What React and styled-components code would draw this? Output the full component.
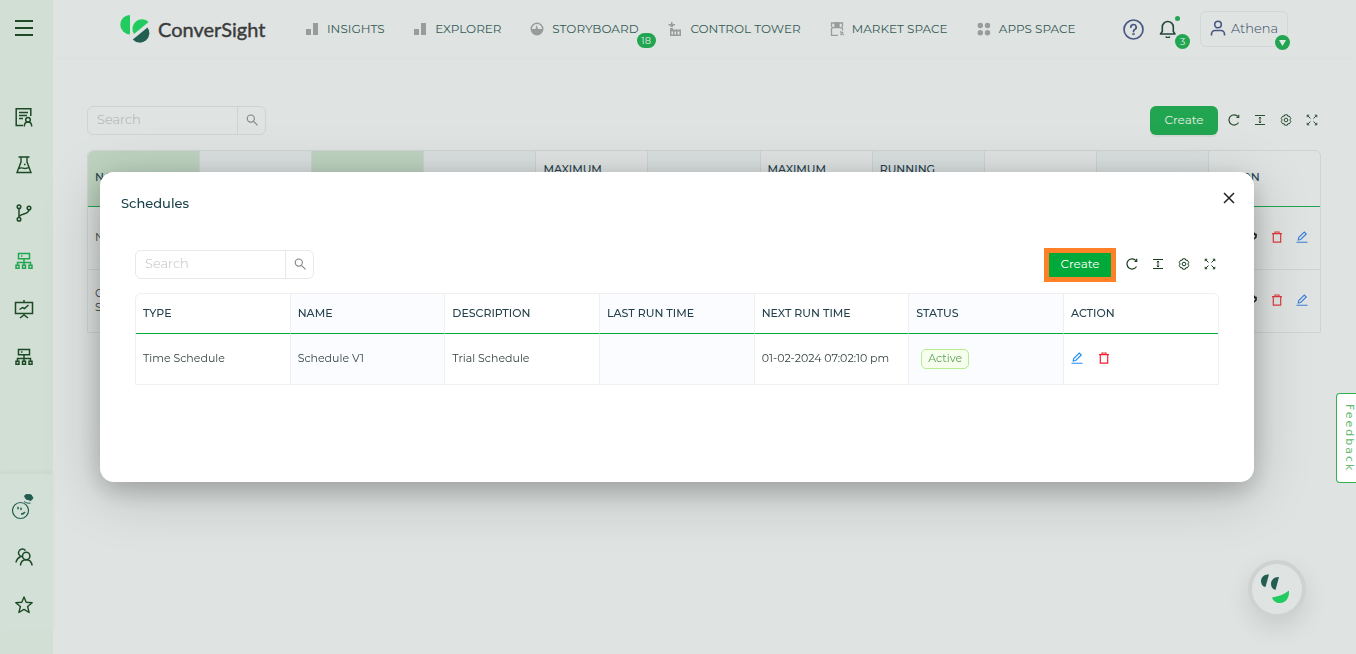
import React from "react";
import styled, { createGlobalStyle, css } from "styled-components";

const green = "#22a550";
const vivid = "#00aa3a";
const ink = "#1c4a24";

const GlobalStyle = createGlobalStyle`
  *, *::before, *::after { box-sizing: border-box; }
  body {
    margin: 0;
    background: #dfe3e2;
    font-family: Montserrat, Inter, "Open Sans", sans-serif;
    font-size: 12px;
    color: #2b4f4b;
  }
  button, input { font: inherit; color: inherit; margin: 0; }
  button { background: none; border: 0; padding: 0; cursor: pointer; }
  a { color: inherit; text-decoration: none; }
`;

const Page = styled.div`
  display: flex;
  min-height: 100vh;
`;

/* Sidebar */
const Sidebar = styled.aside`
  display: flex;
  flex-direction: column;
  width: 53px;
  min-height: 100vh;
  flex: none;
  background: #d1dfd5;
  color: ${ink};
`;
const MenuButton = styled.button`
  display: grid;
  place-items: center;
  width: 48px;
  height: 56px;
  margin-bottom: 37px;
`;
const SideGroup = styled.nav`
  display: flex;
  flex-direction: column;
`;
const SideFooter = styled(SideGroup)`
  margin-top: auto;
  margin-bottom: 23px;
  padding: 7px 0 2px;
  background: #d3e0d7;
  box-shadow: 0 -2px 4px rgba(0, 60, 20, 0.04);
`;
const SideLink = styled.a`
  display: grid;
  place-items: center;
  width: 48px;
  height: ${(p) => (p.$tall ? "52px" : "48px")};
  padding-right: ${(p) => (p.$tall ? "3px" : "0")};
  color: ${(p) => (p.$active ? green : p.$tall ? "#235d50" : ink)};
`;

/* Header */
const Content = styled.div`
  flex: 1;
  min-width: 0;
`;
const Header = styled.header`
  display: flex;
  align-items: center;
  height: 58px;
  padding: 0 68px 0 67px;
  box-shadow: 0 1px 3px rgba(0, 0, 0, 0.02);
`;
const Brand = styled.a`
  display: flex;
  align-items: center;
  gap: 8px;
  width: 148px;
  flex: none;
  color: #3b3b3b;
  font: 400 20px/28px Lato, sans-serif;
  -webkit-text-stroke: 0.4px #3b3b3b;
  svg { flex: none; }
`;
const TopNav = styled.nav`
  display: grid;
  grid-template-columns:
    minmax(0, 108fr) minmax(0, 116fr) minmax(0, 138fr)
    minmax(0, 161fr) minmax(0, 147fr) minmax(0, 101fr);
  flex: 1;
  margin: 0 45px 0 38px;
`;
const TopLink = styled.a`
  position: relative;
  display: flex;
  align-items: center;
  gap: 8px;
  font-size: 12px;
  line-height: 20px;
  white-space: nowrap;
  justify-self: start;
  color: #335a54;
  svg { color: #989c9b; flex: none; }
`;
const Badge = styled.span`
  position: absolute;
  right: ${(p) => p.$right || "-17px"};
  top: ${(p) => p.$top || "14px"};
  min-width: ${(p) => (p.$wide ? "19px" : "15px")};
  height: 15px;
  border-radius: 8px;
  background: ${green};
  color: #dfe9e3;
  font-size: 10px;
  font-weight: 400;
  line-height: 15px;
  text-align: center;
  display: grid;
  place-items: center;
`;
const Dot = styled.span`
  position: absolute;
  right: -3px;
  top: -4px;
  width: 5px;
  height: 5px;
  border-radius: 50%;
  background: ${green};
`;
const HeaderButton = styled.button`
  position: relative;
  display: grid;
  place-items: center;
  margin-right: ${(p) => (p.$last ? "23px" : "15px")};
  color: ${(p) => (p.$dark ? "#26453f" : "#4a5782")};
`;
const UserButton = styled.button`
  position: relative;
  display: flex;
  align-items: center;
  gap: 5px;
  width: 88px;
  height: 36px;
  padding: 0 9px 2px;
  border: 1px solid #d3d8d7;
  border-radius: 6px;
  font-size: 13px;
  font-weight: 300;
  color: #33475e;
  > svg { color: #4a5782; flex: none; }
`;

/* Table area */
const Main = styled.main`
  padding: 48px 35px 0 34px;
`;
const Toolbar = styled.div`
  display: flex;
  align-items: center;
  justify-content: space-between;
  height: 29px;
  padding-right: 3px;
  margin-bottom: ${(p) => (p.$modal ? "14px" : "15px")};
`;
const SearchBox = styled.div`
  display: flex;
  width: 179px;
  height: 29px;
  border: 1px solid ${(p) => (p.$modal ? "#e7e9e9" : "#cfd4d3")};
  border-radius: 6px;
  input {
    flex: 1;
    min-width: 0;
    padding: 0 9px 3px;
    border: 0;
    outline: 0;
    background: transparent;
    font-size: 13px;
    font-weight: 300;
  }
  input::placeholder { color: ${(p) => (p.$modal ? "#c0c0c4" : "#acb0af")}; opacity: 1; }
  button {
    display: grid;
    place-items: center;
    width: 28px;
    padding-bottom: 2px;
    border-left: 1px solid ${(p) => (p.$modal ? "#e7e9e9" : "#cfd4d3")};
    color: #7f8382;
  }
`;
const Tools = styled.div`
  display: flex;
  align-items: center;
  gap: 14px;
  color: ${(p) => (p.$modal ? "#173d1c" : "#2d4f33")};
`;
const ToolButton = styled.button`
  display: grid;
  place-items: center;
  width: 12px;
  height: 12px;
  margin-bottom: 2px;
`;
const CreateButton = styled.button`
  width: 68px;
  height: 29px;
  margin-right: -4px;
  padding-bottom: 2px;
  border-radius: 6px;
  background: ${green};
  color: #e2efe6;
  font-size: 12px;
  box-shadow: 0 2px 1px rgba(0, 0, 0, 0.05);
  ${(p) =>
    p.$highlight &&
    css`
      width: 72px;
      height: 34px;
      border: 5px solid #ff8127;
      border-radius: 0;
      background: ${vivid};
      color: #fff;
      box-shadow: none;
    `}
`;
const Table = styled.table`
  width: 100%;
  table-layout: fixed;
  border-spacing: 0;
  border: 1px solid ${(p) => (p.$modal ? "#eeefef" : "#cfd4d3")};
  border-radius: 6px 6px 0 0;
  th, td {
    padding: ${(p) => (p.$modal ? "0 7px 2px" : "0 7px 3px")};
    text-align: left;
    line-height: 14px;
    border-right: 1px solid ${(p) => (p.$modal ? "#eeefef" : "transparent")};
  }
  th {
    height: ${(p) => (p.$modal ? "40px" : "56px")};
    border-bottom: 1px solid ${(p) => (p.$modal ? vivid : green)};
    font-weight: 500;
    line-height: 16px;
    font-size: 11px;
    color: #24414d;
  }
  thead th:not(:last-child) {
    border-right-color: ${(p) => (p.$modal ? "#eeefef" : "#cdd3d2")};
  }
  th:last-child { width: ${(p) => (p.$modal ? "154px" : "111px")}; }
  td {
    height: ${(p) => (p.$modal ? "50px" : "62px")};
    font-size: 11px;
    color: #33443d;
  }
  tbody tr + tr td { height: 63px; border-top: 1px solid #cfd4d3; }
  th:last-child, td:last-child { border-right: 0; }
`;
const HeadCell = styled.th`
  background: ${(p) =>
    p.$tone === "green" ? "#bed3c0" : p.$tone === "blue" ? "#d9dfdf" : p.$tone === "pale" ? "#fbfcff" : "transparent"};
  &:first-child { border-top-left-radius: 6px; }
`;
const Cell = styled.td`
  background: ${(p) => (p.$tone === "pale" ? "#fbfcff" : "transparent")};
`;
const RowActions = styled.div`
  display: flex;
  align-items: center;
  justify-content: ${(p) => (p.$end ? "flex-end" : "flex-start")};
  gap: ${(p) => (p.$end ? "13px" : "15px")};
  padding-right: 5px;
`;
const ActionButton = styled.button`
  display: grid;
  place-items: center;
  width: 12px;
  height: 12px;
  color: ${(p) => p.$color};
`;
const Tag = styled.span`
  display: inline-block;
  margin: 2px 0 0 5px;
  padding: 0 6px;
  height: 20px;
  border: 1px solid #b7eb8f;
  border-radius: 5px;
  background: #f6ffed;
  color: #5f9f5a;
  font-size: 11px;
  line-height: 17px;
`;

/* Dialog */
const Overlay = styled.div`
  position: fixed;
  inset: 0;
  padding: 172px 102px 0 100px;
`;
const Dialog = styled.section`
  min-height: 310px;
  padding: 0 35px 97px;
  border-radius: 14px;
  background: #fff;
  box-shadow: 0 8px 24px rgba(0, 0, 0, 0.2), 0 12px 60px rgba(0, 0, 0, 0.18);
`;
const DialogHead = styled.header`
  display: flex;
  align-items: center;
  justify-content: space-between;
  height: 52px;
  margin: 0 -18px 26px -14px;
  padding-top: 10px;
  h2 {
    margin: 0;
    font-size: 13px;
    font-weight: 500;
    color: #17404a;
  }
`;
const CloseButton = styled.button`
  display: grid;
  place-items: center;
  width: 16px;
  height: 16px;
  margin-bottom: 10px;
  color: #222;
`;

/* Floating controls */
const Feedback = styled.button`
  position: fixed;
  right: 0;
  top: 393px;
  width: 20px;
  height: 90px;
  padding-left: 5px;
  border: 1px solid #35b24f;
  border-right: 0;
  border-radius: 4px 0 0 4px;
  background: #fff;
  color: #67b970;
  font: 11px/14px "DejaVu Sans", sans-serif;
  letter-spacing: 2px;
  writing-mode: vertical-rl;
`;
const ChatButton = styled.button`
  position: fixed;
  right: 50px;
  bottom: 36px;
  display: grid;
  place-items: center;
  width: 58px;
  height: 58px;
  padding-right: 4px;
  border: 4px solid #ced2d1;
  border-radius: 50%;
  background: #dfe4e3;
  box-shadow: 0 10px 24px rgba(0, 0, 0, 0.1);
`;

/* Icons */
const Svg = ({ s = 18, vb, sw = 1.5, children }) => (
  <svg width={s} height={s} viewBox={vb || "0 0 18 18"} fill="none" stroke="currentColor" strokeWidth={sw} aria-hidden="true">
    {children}
  </svg>
);
const MenuIcon = () => <Svg sw={1.8}><path d="M0 2h18M0 9h18M0 16h18" /></Svg>;
const CertificateIcon = () => (
  <Svg s={20} vb="0 0 20 20">
    <path d="M9 18.5H2.200V1.700h14.600V9M5 5.500h9M5 8.500h8M5 11.500h4" />
    <circle cx="14" cy="12.700" r="2.300" />
    <path d="M10.300 19.500c0-3 1.700-4.500 3.700-4.500s3.700 1.500 3.700 4.500" />
  </Svg>
);
const FlaskIcon = () => (
  <Svg sw={1.400}><path d="M3.500 1h11M6 1v5L2 16.500h14L12 6V1M4 12.500c3-2 5 1.500 9.500-.8M9 8.500h1.500" /></Svg>
);
const BranchIcon = () => (
  <Svg>
    <circle cx="4" cy="2.700" r="1.800" /><circle cx="4" cy="15.300" r="1.800" /><circle cx="14" cy="4" r="1.800" />
    <path d="M4 4.500v9M4 12.500c4.500-4 9-1.500 10-6.700" />
  </Svg>
);
const NetworkIcon = () => (
  <Svg>
    <path d="M3.500 1.500h11v5.300h-11zM9 7v6M2.500 13v-2.500h13V13M6 4h1.500" />
    <path d="M1 13.200h3v3H1zM7.500 13.200h3v3h-3zM14 13.200h3v3h-3z" />
  </Svg>
);
const BoardIcon = () => (
  <Svg s={20} vb="0 0 20 20">
    <path d="M1.500 3.500h17v11h-17zM10 1v2.500M10 14.500v2M6 19l4-3 4 3M5.500 10.500l3-2 2 1 4-3.500" />
  </Svg>
);
const MascotIcon = () => (
  <svg width="26" height="26" viewBox="0 0 26 26" fill="none" stroke="currentColor" aria-hidden="true">
    <circle cx="10.500" cy="16.500" r="8" strokeWidth="1.200" />
    <path d="M14.500 2l1.500-1.500 5 .3 2 3.200-2 2.500-5-1.500z" fill="currentColor" />
    <path d="M14 7.500c2 1.500 4.500 2 6.500 1.500" />
    <ellipse cx="8" cy="14" rx=".8" ry="1.500" fill="currentColor" stroke="none" />
    <ellipse cx="11" cy="14.800" rx=".8" ry="1.500" fill="currentColor" stroke="none" />
    <path d="M11 20c1.500.6 3.500 0 4-2-1 1-2.500 1-4 2z" fill="currentColor" />
  </svg>
);
const UsersIcon = () => (
  <Svg>
    <circle cx="11.200" cy="8" r="3.700" />
    <path d="M5.500 17.500c.3-3.700 2.500-5.800 5.700-5.800s5.400 2.100 5.900 5.800M7 8.700C3.500 8 2.900 5 4 3c1.300-2.600 5-2.700 6.500-.3M5.500 8.700C3 9.800 1.500 11.500 1 14.500" />
  </Svg>
);
const StarIcon = () => (
  <Svg sw={1.4}><path strokeLinejoin="round" d="M9 1l2.200 5.300 6 .4-4.600 3.800 1.500 6L9 13.400 3.900 16.500l1.500-6L.8 6.700l6-.4z" /></Svg>
);
const BarsIcon = () => (
  <svg width="13" height="14" viewBox="0 0 13 14" fill="currentColor" aria-hidden="true"><path d="M0 7h5v6H0zM7 1h5v12H7z" /></svg>
);
const GaugeIcon = () => (
  <svg width="14" height="14" viewBox="0 0 14 14" fill="currentColor" aria-hidden="true">
    <path fillRule="evenodd" d="M7 .5a6.500 6.500 0 1 1 0 13 6.500 6.500 0 0 1 0-13zm0 1.500a5 5 0 0 0-5 5h3.500l1-4 1.500 4H12a5 5 0 0 0-5-5z" />
  </svg>
);
const TowerIcon = () => (
  <svg width="14" height="14" viewBox="0 0 14 14" fill="currentColor" aria-hidden="true">
    <path fillRule="evenodd" d="M3 0h1.500v2H7v1.500H5V5H2.500V3.500H.5V2H3zM2 6h3v1.500h8V14H2zm1.500 3.500v3H5v-3zm3 0v3H8v-3zm3 0v3h2v-3z" />
  </svg>
);
const MarketIcon = () => (
  <Svg s={14} vb="0 0 14 14" sw={1.300}>
    <path d="M1.500 6v7.300h6.500M12.500 6v2.500M1.500 1h11v3a2 2 0 0 1-3 1.500h-5A2 2 0 0 1 1.500 4z" />
    <path d="M5 1h4v4h-4z" fill="currentColor" />
    <path d="M10 10h1.500M12.500 12.500H14M13 10l-2.500 3" />
  </Svg>
);
const AppsIcon = () => (
  <svg width="14" height="14" viewBox="0 0 14 14" fill="currentColor" aria-hidden="true">
    <circle cx="3.300" cy="3.500" r="2.700" /><circle cx="10.500" cy="3.500" r="2.700" />
    <circle cx="3.300" cy="10.700" r="2.700" /><circle cx="10.500" cy="10.700" r="2.700" />
  </svg>
);
const HelpIcon = () => (
  <Svg s={21} vb="0 0 21 21" sw={1.700}>
    <circle cx="10.500" cy="10.500" r="9.500" />
    <path d="M7.800 8.200a2.700 2.700 0 1 1 4 2.400c-.9.500-1.300.8-1.300 1.800" strokeLinecap="round" />
    <circle cx="10.500" cy="15" r=".4" />
  </Svg>
);
const BellIcon = () => (
  <Svg sw={1.600}><path strokeLinejoin="round" d="M1.500 14h14.500l-1.700-2.500V7a5.500 5.500 0 0 0-11 0v4.500zM7 16.500a2 2 0 0 0 3.700 0" /></Svg>
);
const UserIcon = () => (
  <Svg s={16} vb="0 0 16 16" sw={1.600}>
    <circle cx="8" cy="4.500" r="3.300" />
    <path d="M1.500 15.500v-1.500a3.500 3.500 0 0 1 3.500-3.500h6a3.500 3.500 0 0 1 3.500 3.500v1.500" />
  </Svg>
);
const SearchIcon = () => (
  <Svg s={12} vb="0 0 12 12" sw={1.100}><circle cx="4.800" cy="4.600" r="3.600" /><path d="M7.500 7.300l4 4" /></Svg>
);
const ReloadIcon = () => (
  <Svg s={12} vb="0 0 12 12" sw={1.200}><path d="M10.500 8.500A5.100 5.100 0 1 1 10 2.700" /><path d="M10.700.8v2.700H8.500" /></Svg>
);
const DensityIcon = () => (
  <Svg s={12} vb="0 0 12 12" sw={1}><path d="M1 1.500h10M1 10.500h10M6 3v6M5 4.300L6 3l1 1.300M5 7.700L6 9l1-1.300" /></Svg>
);
const GearIcon = () => (
  <Svg s={12} vb="0 0 12 12" sw={1}>
    <path strokeLinejoin="round" d="M4.700.800h2.600l.5 1.500 1.500-.2 1.500 2.400-1 1.500 1 1.500-1.500 2.400-1.500-.2-.5 1.500H4.700l-.5-1.500-1.500.2-1.500-2.400 1-1.500-1-1.500 1.500-2.400 1.500.2z" />
    <circle cx="6" cy="6" r="1.800" />
  </Svg>
);
const ExpandIcon = () => (
  <Svg s={12} vb="0 0 12 12" sw={1}>
    <path d="M1.200 3.200V1.200h2M8.800 1.200h2v2M10.800 8.800v2h-2M3.200 10.800h-2v-2" />
    <path d="M1.200 1.200l3.300 3.300M10.800 1.200L7.500 4.500M10.800 10.800L7.500 7.500M1.200 10.800l3.300-3.300" />
  </Svg>
);
const TrashIcon = () => (
  <Svg s={12} vb="0 0 12 12" sw={1.200}><path d="M1 2.700h10M4 2.500V1h4v1.500M2.300 3v8.200h7.400V3" /></Svg>
);
const EditIcon = () => (
  <Svg s={12} vb="0 0 12 12" sw={1.100}><path d="M.5 11.300h11M2.200 9l.5-2.500L8.300 1l2 2-5.600 5.500z" /></Svg>
);
const RunIcon = () => (
  <Svg s={12} vb="0 0 12 12" sw={1.600}><path d="M2 6a4 4 0 0 1 7-3M7 3.500h3V6L8 8" /></Svg>
);
const CloseIcon = () => <Svg s={12} vb="0 0 12 12" sw={1.500}><path d="M1 1l10 10M11 1L1 11" /></Svg>;
const CaretIcon = () => (
  <svg width="7" height="6" viewBox="0 0 7 6" fill="currentColor" aria-hidden="true"><path d="M0 0h7L3.500 6z" /></svg>
);
const BrandMark = () => (
  <svg width="30" height="28" viewBox="0 0 30 28" aria-hidden="true">
    <path fill="#22cb5d" d="M10 0v19.400A9.700 9.700 0 0 1 10 0zM14 19A9.500 9.500 0 0 1 28.600 7z" />
    <path fill="#235f51" d="M12.800 24.500A9.500 9.500 0 0 0 27.500 12.500z" />
  </svg>
);
const ChatMark = () => (
  <svg width="30" height="30" viewBox="0 0 30 30" aria-hidden="true">
    <path fill="#235f51" d="M9 .5C4.500-.3 1 3 1 7c0 3 2 6 4.500 6z" />
    <path fill="#235f51" d="M19 3c-4.500-.3-8 2.500-8 7 0 3 2 5.500 4.500 6z" />
    <path fill="#22cb5d" d="M12 23.500c6-1 12-3 17-7 .5 7-3 12.500-9 12.500-4 0-7-2-8-5.500z" />
  </svg>
);

const sideLinks = [
  ["Certificates", CertificateIcon],
  ["Experiments", FlaskIcon],
  ["Branches", BranchIcon],
  ["Workflows", NetworkIcon, true],
  ["Presentations", BoardIcon],
  ["Pipelines", NetworkIcon],
];
const topLinks = [
  ["INSIGHTS", BarsIcon],
  ["EXPLORER", BarsIcon],
  ["STORYBOARD", GaugeIcon, "18"],
  ["CONTROL TOWER", TowerIcon],
  ["MARKET SPACE", MarketIcon],
  ["APPS SPACE", AppsIcon],
];
const backColumns = [
  ["NAME", "green"],
  ["", "blue"],
  ["", "green"],
  ["", "blue"],
  ["MAXIMUM", ""],
  ["", "blue"],
  ["MAXIMUM", ""],
  ["RUNNING", "blue"],
  ["", ""],
  ["", "blue"],
  ["ACTION", ""],
];
const backRows = [["N"], ["C", "S"]];
const columns = ["TYPE", "NAME", "DESCRIPTION", "LAST RUN TIME", "NEXT RUN TIME", "STATUS", "ACTION"];
const schedule = ["Time Schedule", "Schedule V1", "Trial Schedule", "", "01-02-2024 07:02:10 pm"];
const tone = (i) => (i % 2 ? "pale" : "");

function TableToolbar({ modal }) {
  return (
    <Toolbar $modal={modal}>
      <SearchBox $modal={modal} role="search">
        <input type="text" placeholder="Search" aria-label={modal ? "Search schedules" : "Search"} />
        <button aria-label="Submit search"><SearchIcon /></button>
      </SearchBox>
      <Tools $modal={modal}>
        <CreateButton $highlight={modal}>Create</CreateButton>
        <ToolButton aria-label="Reload"><ReloadIcon /></ToolButton>
        <ToolButton aria-label="Density"><DensityIcon /></ToolButton>
        <ToolButton aria-label="Settings"><GearIcon /></ToolButton>
        <ToolButton aria-label="Full screen"><ExpandIcon /></ToolButton>
      </Tools>
    </Toolbar>
  );
}

export default function App() {
  return (
    <>
      <GlobalStyle />
      <Page>
        <Sidebar>
          <MenuButton aria-label="Menu"><MenuIcon /></MenuButton>
          <SideGroup aria-label="Tools">
            {sideLinks.map(([label, Icon, active]) => (
              <SideLink key={label} href="#" aria-label={label} $active={active}><Icon /></SideLink>
            ))}
          </SideGroup>
          <SideFooter aria-label="Account">
            <SideLink href="#" aria-label="Assistant" $tall><MascotIcon /></SideLink>
            <SideLink href="#" aria-label="Users"><UsersIcon /></SideLink>
            <SideLink href="#" aria-label="Favourites"><StarIcon /></SideLink>
          </SideFooter>
        </Sidebar>
        <Content>
          <Header>
            <Brand href="#"><BrandMark />ConverSight</Brand>
            <TopNav aria-label="Main">
              {topLinks.map(([label, Icon, count]) => (
                <TopLink key={label} href="#">
                  <Icon />{label}
                  {count && <Badge $wide>{count}</Badge>}
                </TopLink>
              ))}
            </TopNav>
            <HeaderButton aria-label="Help"><HelpIcon /></HeaderButton>
            <HeaderButton aria-label="Notifications" $dark $last>
              <BellIcon /><Dot />
              <Badge $right="-13px">3</Badge>
            </HeaderButton>
            <UserButton>
              <UserIcon />Athena
              <Badge $right="-3px" $top="23px"><CaretIcon /></Badge>
            </UserButton>
          </Header>
          <Main>
            <TableToolbar />
            <Table>
              <thead>
                <tr>
                  {backColumns.map(([label, shade], i) => (
                    <HeadCell key={i} $tone={shade} scope="col">
                      {label}
                      {/M$|G$/.test(label) && <><br />&nbsp;</>}
                    </HeadCell>
                  ))}
                </tr>
              </thead>
              <tbody>
                {backRows.map((lines, r) => (
                  <tr key={r}>
                    <Cell>{lines.map((line) => <div key={line}>{line}</div>)}</Cell>
                    {backColumns.slice(2).map((_, i) => <Cell key={i} />)}
                    <Cell>
                      <RowActions $end>
                        <ActionButton $color="#1d1f1f" aria-label="Run"><RunIcon /></ActionButton>
                        <ActionButton $color="#dd3a3e" aria-label="Delete"><TrashIcon /></ActionButton>
                        <ActionButton $color="#3c7fd8" aria-label="Edit"><EditIcon /></ActionButton>
                      </RowActions>
                    </Cell>
                  </tr>
                ))}
              </tbody>
            </Table>
          </Main>
        </Content>
      </Page>
      <ChatButton aria-label="Open chat"><ChatMark /></ChatButton>
      <Overlay>
        <Dialog role="dialog" aria-labelledby="schedules-title">
          <DialogHead>
            <h2 id="schedules-title">Schedules</h2>
            <CloseButton aria-label="Close"><CloseIcon /></CloseButton>
          </DialogHead>
          <TableToolbar modal />
          <Table $modal>
            <thead>
              <tr>{columns.map((c, i) => <HeadCell key={c} $tone={tone(i)} scope="col">{c}</HeadCell>)}</tr>
            </thead>
            <tbody>
              <tr>
                {schedule.map((value, i) => <Cell key={i} $tone={tone(i)}>{value}</Cell>)}
                <Cell $tone="pale"><Tag>Active</Tag></Cell>
                <Cell>
                  <RowActions>
                    <ActionButton $color="#1c8cf5" aria-label="Edit"><EditIcon /></ActionButton>
                    <ActionButton $color="#f5222d" aria-label="Delete"><TrashIcon /></ActionButton>
                  </RowActions>
                </Cell>
              </tr>
            </tbody>
          </Table>
        </Dialog>
      </Overlay>
      <Feedback>Feedback</Feedback>
    </>
  );
}
